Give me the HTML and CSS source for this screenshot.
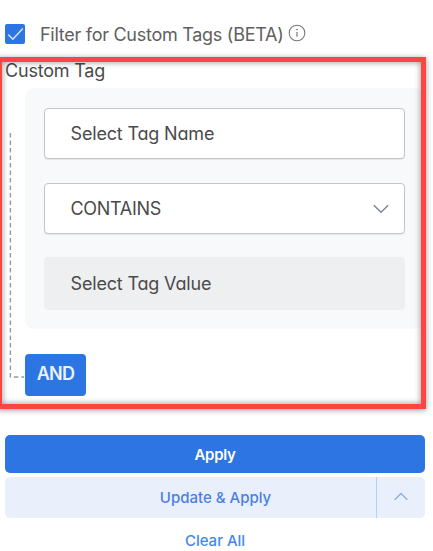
FILE: index.html
```html
<!DOCTYPE html>
<html lang="en">
<head>
<meta charset="utf-8">
<title>Filters</title>
<link rel="stylesheet" href="styles.css">
</head>
<body>
<main class="filters">
  <label class="toggle">
    <svg class="check" viewBox="0 0 20 20"><rect width="20" height="20" rx="2" fill="#2c75e3"/><path d="M3.2 10.5 7.8 15.2 17.8 4.4" fill="none" stroke="#dce9ff" stroke-width="1.4"/></svg>
    <span class="toggle-text">Filter for Custom Tags (BETA)</span>
    <svg class="info" viewBox="0 0 18 18"><circle cx="9" cy="9" r="7.8" fill="none" stroke="#777" stroke-width="1.1"/><path d="M9 8v4.8" stroke="#777" stroke-width="1.2"/><circle cx="9" cy="5.5" r=".85" fill="#777"/></svg>
  </label>
  <section class="tag-section">
    <h2 class="heading"><span>Custom Tag</span></h2>
    <div class="group">
      <svg class="connector" viewBox="0 0 20 250"><path d="M5.4 3V247H19" fill="none" stroke="#999" stroke-width="1.4" stroke-dasharray="4.4 3.1"/></svg>
      <div class="group-body">
        <div class="panel">
          <div class="field"><span class="name">Select Tag Name</span></div>
          <div class="field"><span class="operator">CONTAINS</span>
            <svg class="chevron" viewBox="0 0 16 10"><path d="M.8 1.2 8 8.2l7.2-7" fill="none" stroke="#7e8692" stroke-width="1.5"/></svg>
          </div>
          <div class="field disabled"><span class="value">Select Tag Value</span></div>
        </div>
        <button class="and"><span>AND</span></button>
      </div>
    </div>
  </section>
  <div class="actions">
    <button class="apply"><span>Apply</span></button>
    <div class="split">
      <button class="update"><span>Update &amp; Apply</span></button>
      <button class="more" aria-label="More"><svg viewBox="0 0 14 9"><path d="M.7 7.8 7 1.6l6.3 6.2" fill="none" stroke="#8fadda" stroke-width="1.4"/></svg></button>
    </div>
    <button class="clear"><span>Clear All</span></button>
  </div>
</main>
</body>
</html>
```
FILE: styles.css
```css
* { box-sizing: border-box; }
body {
  margin: 0;
  background: #fff;
  color: #4a4a4a;
  font-family: Inter, "Liberation Sans", sans-serif;
  font-size: 18px;
  overflow: hidden;
}
svg { display: block; flex: none; }
span { white-space: nowrap; }
button { border: 0; padding: 0; font: inherit; display: flex; align-items: center; justify-content: center; }
.filters { height: 551px; }
.toggle { height: 57px; padding: 11px 0 0 5px; display: flex; align-items: center; color: #606060; }
.check { width: 20px; height: 20px; }
.toggle-text { margin-left: 15px; width: 247px; letter-spacing: -.27px; }
.info { width: 18px; height: 18px; margin: -3px 0 0 1px; }
.tag-section { position: relative; height: 352px; width: 426px; }
.tag-section::after {
  content: "";
  position: absolute;
  inset: 0 0 0 -3px;
  border: 5px solid #ff4444;
  box-shadow: 0 1px 6px rgba(0, 0, 0, .4), inset 0 0 6px rgba(0, 0, 0, .45);
  pointer-events: none;
}
.heading { margin: 0; padding: 2px 0 0 5px; height: 31px; font-size: 18px; line-height: 24px; font-weight: 400; letter-spacing: -.2px; }
.group { display: flex; width: 424px; }
.connector { width: 20px; height: 250px; margin: 42px 0 0 5px; }
.group-body { flex: 1; }
.panel {
  height: 241px;
  padding: 20px 19px 18px;
  background: #f8f9fb;
  border-radius: 9px;
  display: flex;
  flex-direction: column;
  gap: 24px;
}
.field {
  flex: none;
  height: 51px;
  padding: 0 15px 0 25.5px;
  background: #fff;
  border: 1.4px solid #c2c6cc;
  border-radius: 4px;
  box-shadow: 0 1px 1px rgba(0, 0, 0, .08);
  display: flex;
  align-items: center;
  justify-content: space-between;
  font-feature-settings: "cv11";
  letter-spacing: -.17px;
}
.operator { letter-spacing: -.3px; }
.disabled { height: 53px; margin-top: -1px; padding-left: 26.5px; background: #eeeff1; border: 0; box-shadow: none; }
.chevron { width: 16px; height: 10px; }
.and {
  width: 61px;
  height: 42px;
  margin-top: 25px;
  padding-bottom: 4px;
  background: #2c75e3;
  border-radius: 4px;
  color: #eaf2ff;
  font-weight: 600;
  letter-spacing: -.8px;
}
.actions { margin: 26px 8px 0 5px; width: 420px; font-size: 15px; font-weight: 500; }
.apply { width: 100%; height: 38px; border-radius: 5px; background: #2c75e3; color: #fff; font-weight: 600; letter-spacing: -.3px; }
.split { display: flex; height: 41px; margin-top: 4px; border-radius: 5px; background: #e9f0fc; overflow: hidden; }
.update { flex: 1; padding-left: 50px; background: none; color: #4a7fe3; }
.more { width: 49px; border-left: 1.5px solid #b5cffa; background: none; }
.more svg { width: 14px; height: 9px; margin-top: -3px; }
.clear { width: 100%; height: 33px; padding-top: 12px; background: none; color: #4386ee; }
```
